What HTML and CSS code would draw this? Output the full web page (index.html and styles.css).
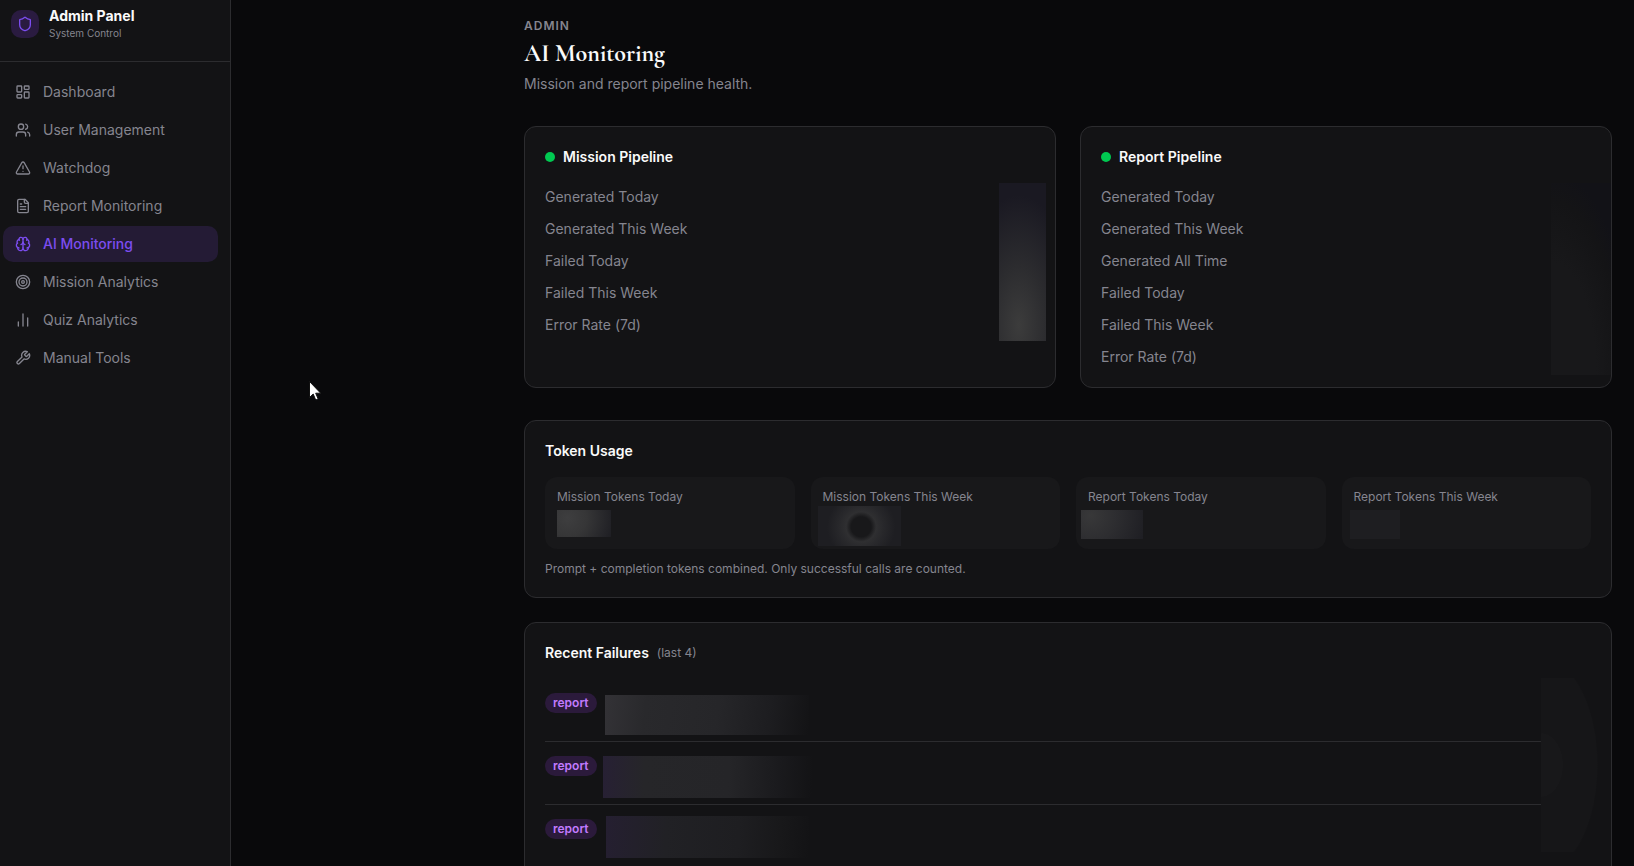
FILE: index.html
```html
<!DOCTYPE html>
<html lang="en">
<head>
<meta charset="utf-8">
<title>AI Monitoring</title>
<link rel="stylesheet" href="styles.css">
</head>
<body>
<div class="app">
  <aside class="sidebar">
    <div class="brand">
      <span class="brand-icon"><svg class="icon" viewBox="0 0 24 24"><path d="M20 13c0 5-3.500 7.500-7.660 8.950a1 1 0 0 1-.670-.010C7.500 20.500 4 18 4 13V6a1 1 0 0 1 1-1c2 0 4.500-1.200 6.240-2.720a1.170 1.170 0 0 1 1.520 0C14.510 3.810 17 5 19 5a1 1 0 0 1 1 1z"/></svg></span>
      <div>
        <div class="brand-name">Admin Panel</div>
        <div class="brand-sub">System Control</div>
      </div>
    </div>
    <nav class="nav">
      <a class="nav-item" href="#"><svg class="icon" viewBox="0 0 24 24"><rect width="7" height="9" x="3" y="3" rx="1"/><rect width="7" height="5" x="14" y="3" rx="1"/><rect width="7" height="9" x="14" y="12" rx="1"/><rect width="7" height="5" x="3" y="16" rx="1"/></svg>Dashboard</a>
      <a class="nav-item" href="#"><svg class="icon" viewBox="0 0 24 24"><path d="M16 21v-2a4 4 0 0 0-4-4H6a4 4 0 0 0-4 4v2"/><circle cx="9" cy="7" r="4"/><path d="M22 21v-2a4 4 0 0 0-3-3.870"/><path d="M16 3.130a4 4 0 0 1 0 7.750"/></svg>User Management</a>
      <a class="nav-item" href="#"><svg class="icon" viewBox="0 0 24 24"><path d="m21.730 18-8-14a2 2 0 0 0-3.480 0l-8 14A2 2 0 0 0 4 21h16a2 2 0 0 0 1.730-3"/><path d="M12 9v4"/><path d="M12 17h.01"/></svg>Watchdog</a>
      <a class="nav-item" href="#"><svg class="icon" viewBox="0 0 24 24"><path d="M15 2H6a2 2 0 0 0-2 2v16a2 2 0 0 0 2 2h12a2 2 0 0 0 2-2V7Z"/><path d="M14 2v4a2 2 0 0 0 2 2h4"/><path d="M10 9H8"/><path d="M16 13H8"/><path d="M16 17H8"/></svg>Report Monitoring</a>
      <a class="nav-item active" href="#" aria-current="page"><svg class="icon" viewBox="0 0 24 24"><path d="M12 18V5"/><path d="M15 13a4.170 4.170 0 0 1-3-4 4.170 4.170 0 0 1-3 4"/><path d="M17.598 6.500A3 3 0 1 0 12 5a3 3 0 1 0-5.598 1.500"/><path d="M17.997 5.125a4 4 0 0 1 2.526 5.770"/><path d="M18 18a4 4 0 0 0 2-7.464"/><path d="M19.967 17.483A4 4 0 1 1 12 18a4 4 0 1 1-7.967-.517"/><path d="M6 18a4 4 0 0 1-2-7.464"/><path d="M6.003 5.125a4 4 0 0 0-2.526 5.770"/></svg>AI Monitoring</a>
      <a class="nav-item" href="#"><svg class="icon" viewBox="0 0 24 24"><circle cx="12" cy="12" r="10"/><circle cx="12" cy="12" r="6"/><circle cx="12" cy="12" r="2"/></svg>Mission Analytics</a>
      <a class="nav-item" href="#"><svg class="icon" viewBox="0 0 24 24"><path d="M5 21v-6"/><path d="M12 21V3"/><path d="M19 21V9"/></svg>Quiz Analytics</a>
      <a class="nav-item" href="#"><svg class="icon" viewBox="0 0 24 24"><path d="M14.700 6.300a1 1 0 0 0 0 1.400l1.600 1.600a1 1 0 0 0 1.400 0l3.770-3.770a6 6 0 0 1-7.940 7.940l-6.910 6.910a2.120 2.120 0 0 1-3-3l6.910-6.910a6 6 0 0 1 7.940-7.940l-3.760 3.760z"/></svg>Manual Tools</a>
    </nav>
  </aside>

  <main class="main">
    <header class="page-head">
      <p class="eyebrow">Admin</p>
      <h1 class="title">AI Monitoring</h1>
      <p class="subtitle">Mission and report pipeline health.</p>
    </header>

    <div class="pipelines">
      <section class="card">
        <h2 class="card-title"><span class="dot"></span>Mission Pipeline</h2>
        <ul class="stats">
          <li>Generated Today</li><li>Generated This Week</li><li>Failed Today</li><li>Failed This Week</li><li>Error Rate (7d)</li>
        </ul>
        <div class="mask mask-mission"></div>
      </section>
      <section class="card">
        <h2 class="card-title"><span class="dot"></span>Report Pipeline</h2>
        <ul class="stats">
          <li>Generated Today</li><li>Generated This Week</li><li>Generated All Time</li><li>Failed Today</li><li>Failed This Week</li><li>Error Rate (7d)</li>
        </ul>
        <div class="mask mask-report"></div>
      </section>
    </div>

    <section class="card tokens">
      <h2 class="card-title">Token Usage</h2>
      <div class="tiles">
        <div class="tile">Mission Tokens Today<div class="mask mask-a"></div></div>
        <div class="tile">Mission Tokens This Week<div class="mask mask-b"></div></div>
        <div class="tile">Report Tokens Today<div class="mask mask-c"></div></div>
        <div class="tile">Report Tokens This Week<div class="mask mask-d"></div></div>
      </div>
      <p class="note">Prompt + completion tokens combined. Only successful calls are counted.</p>
    </section>

    <section class="card failures">
      <h2 class="card-title">Recent Failures <span class="count">(last 4)</span></h2>
      <ul class="failure-list">
        <li class="failure"><span class="badge">report</span><div class="mask mask-r1"></div></li>
        <li class="failure"><span class="badge">report</span><div class="mask mask-r2"></div></li>
        <li class="failure"><span class="badge">report</span><div class="mask mask-r3"></div></li>
      </ul>
      <div class="mask mask-side"></div>
    </section>
  </main>
</div>
<svg class="cursor" viewBox="0 0 12 20"><path d="M.500.500v16l3.700-3.500 2.500 6 2.500-1-2.500-5.800h5z"/></svg>
</body>
</html>
```
FILE: styles.css
```css
* { box-sizing: border-box; }

body {
  margin: 0;
  height: 100vh;
  overflow: hidden;
  background: #09090b;
  color: #85858f;
  font: 14px/20px Inter, "Liberation Sans", sans-serif;
}

h1, h2, p, ul { margin: 0; padding: 0; }
ul { list-style: none; }

.app { display: flex; height: 100vh; }

.sidebar {
  flex: none;
  width: 231px;
  background: #131315;
  border-right: 1px solid #2c2c2f;
}

.brand {
  display: flex;
  align-items: center;
  gap: 10px;
  height: 62px;
  padding: 0 11px 14px;
  border-bottom: 1px solid #2c2c2f;
}
.brand-icon {
  display: grid;
  place-items: center;
  width: 28px;
  height: 28px;
  border-radius: 10px;
  background: #2a1b40;
  color: #7c4df0;
}
.brand-name { color: #fafafa; font-weight: 700; line-height: 18px; }
.brand-sub { font-size: 10px; line-height: 16px; }

.icon {
  flex: none;
  width: 16px;
  height: 16px;
  fill: none;
  stroke: currentColor;
  stroke-width: 2;
  stroke-linecap: round;
  stroke-linejoin: round;
}

.nav {
  display: flex;
  flex-direction: column;
  gap: 2px;
  padding: 12px 12px 12px 3px;
}
.nav-item {
  display: flex;
  align-items: center;
  gap: 12px;
  height: 36px;
  padding: 0 12px;
  border-radius: 10px;
  color: inherit;
  text-decoration: none;
}
.nav-item.active { background: #241b35; color: #7c4df0; font-weight: 500; }

.main {
  flex: 1;
  min-width: 0;
  height: 100vh;
  overflow: hidden;
  padding: 18px 22px 0 293px;
}

.eyebrow {
  font-size: 12px;
  line-height: 16px;
  font-weight: 600;
  letter-spacing: 1px;
  text-transform: uppercase;
}
.title {
  margin-top: 4px;
  color: #fafafa;
  font: 700 24px/32px "Cormorant Garamond", "Liberation Serif", serif;
}
.subtitle { margin-top: 4px; }

.pipelines {
  display: grid;
  grid-template-columns: 1fr 1fr;
  gap: 24px;
  margin-top: 32px;
}
.card {
  position: relative;
  padding: 20px;
  border: 1px solid #2c2c2f;
  border-radius: 12px;
  background: #131315;
}
.card-title {
  display: flex;
  align-items: center;
  gap: 8px;
  color: #fafafa;
  font-size: 14px;
  line-height: 20px;
  font-weight: 600;
}
.dot { width: 10px; height: 10px; border-radius: 50%; background: #00c951; }
.stats { display: grid; gap: 12px; margin-top: 20px; }

.tokens { margin-top: 32px; }
.tiles {
  display: grid;
  grid-template-columns: repeat(4, 1fr);
  gap: 16px;
  margin-top: 16px;
}
.tile {
  position: relative;
  height: 72px;
  padding: 12px;
  border-radius: 12px;
  background: #18181a;
  font-size: 12px;
  line-height: 16px;
}
.note { margin-top: 12px; font-size: 12px; line-height: 16px; }

.failures { margin-top: 24px; }
.count { color: #85858f; font-size: 12px; font-weight: 400; }
.failure-list { margin-top: 16px; }
.failure {
  position: relative;
  display: flex;
  align-items: flex-start;
  height: 63px;
  padding-top: 14px;
  border-bottom: 1px solid #2c2c2f;
}
.badge {
  padding: 2px 8px;
  border-radius: 10px;
  background: #2b1a3b;
  color: #c27aff;
  font-size: 12px;
  line-height: 16px;
  font-weight: 600;
}

/* Blurred panels that lie over private values */
.mask { position: absolute; }
.mask-mission {
  top: 56px; right: 9px; width: 47px; height: 158px;
  background: radial-gradient(ellipse 60px 130px at 42% 90%, #3c3c3c, #2c2c2f 45%, #1a1922);
}
.mask-report {
  top: 56px; right: 0; width: 60px; height: 192px;
  background: radial-gradient(ellipse 82px 205px at 0 100%, #18181a 55%, #141416 85%, #121217);
}
.mask-a {
  top: 33px; left: 12px; width: 54px; height: 27px;
  background: radial-gradient(circle at 20% 30%, #3e3e3f, #363637 40%, #1e1e23);
}
.mask-b {
  top: 29px; left: 7px; width: 83px; height: 40px;
  background: radial-gradient(circle at 52% 52%, #18181a 10px, #2f2f31 15px, #28282b 22px, #1e1e22 34px);
}
.mask-c {
  top: 33px; left: 5px; width: 62px; height: 29px;
  background: radial-gradient(circle at 15% 20%, #383839, #2d2d30 45%, #1e1e23);
}
.mask-d { top: 33px; left: 8px; width: 50px; height: 29px; background: #1e1e21; }
.mask-r1 {
  top: 16px; left: 60px; width: 204px; height: 40px;
  background: linear-gradient(97deg, #333236, #29292c 20%, #262629 55%, #1d1d20 80%, #131315);
}
.mask-r2 {
  top: 14px; left: 58px; width: 209px; height: 42px;
  background: linear-gradient(92deg, #272034, #262629 20%, #252528 60%, #1a1a1d 84%, #131315);
}
.mask-r3 {
  top: 11px; left: 61px; width: 203px; height: 42px;
  background: linear-gradient(95deg, #251f31, #212125 30%, #1e1e21 65%, #18181a 85%, #131315);
}
.mask-side {
  top: 55px; right: 12px; width: 58px; height: 174px;
  background:
    radial-gradient(ellipse 22px 32px at 0 50%, #18181a 98%, transparent),
    radial-gradient(ellipse 57px 108px at 0 50%, #161618 98%, #131315);
}

.cursor {
  position: absolute;
  left: 309px;
  top: 381px;
  width: 12px;
  height: 20px;
  fill: #fff;
  stroke: #111;
  stroke-width: 1;
}
```
